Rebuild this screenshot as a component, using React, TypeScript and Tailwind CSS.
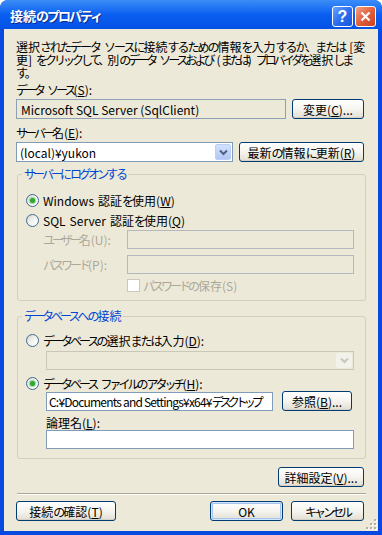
import React from "react";

// MS UI Gothic style: kana are narrower than kanji, spaces a bit wider
function J({
  t,
  hira = "tracking-[-2px]",
  kata = "tracking-[-3px]",
}: {
  t: string;
  hira?: string;
  kata?: string;
}) {
  const parts = t.split(/([\u3040-\u309f\u3001\u3002]+|[\u30a0-\u30ff]+| )/).filter(Boolean);
  return (
    <>
      {parts.map((p, i) => {
        if (p === " ") return <span key={i} className="inline-block w-[4px]" />;
        if (/[\u3040-\u309f\u3001\u3002]/.test(p))
          return (
            <span key={i} className={hira}>
              {p}
            </span>
          );
        if (/[\u30a0-\u30ff]/.test(p))
          return (
            <span key={i} className={kata}>
              {p}
            </span>
          );
        return <React.Fragment key={i}>{p}</React.Fragment>;
      })}
    </>
  );
}

function Btn({
  children,
  className = "",
  isDefault = false,
}: {
  children: React.ReactNode;
  className?: string;
  isDefault?: boolean;
}) {
  return (
    <div
      className={`flex h-[20px] items-center justify-center rounded-[3px] border border-[#003c74] bg-linear-to-b from-white via-[#f5f4ef] to-[#e2ded2] whitespace-nowrap text-black ${
        isDefault
          ? "shadow-[inset_0_0_0_1px_#cee7ff,inset_0_0_0_2px_#a8c4ee]"
          : "shadow-[inset_0_-1px_0_#d6d0c5]"
      } ${className}`}
    >
      {children}
    </div>
  );
}

function Radio({ checked = false }: { checked?: boolean }) {
  return (
    <span className="flex h-[13px] w-[13px] shrink-0 items-center justify-center rounded-full border border-[#3e6a96] bg-linear-to-br from-[#d8d8d2] via-[#f3f3ef] to-white">
      {checked && (
        <span className="h-[5px] w-[5px] rounded-full bg-[#2fa82f] shadow-[0_0_0_1px_#9bd89b]" />
      )}
    </span>
  );
}

function Chevron({ color }: { color: string }) {
  return (
    <svg width="9" height="7" viewBox="0 0 9 7">
      <path d="M1 1.5 L4.5 5 L8 1.5" fill="none" stroke={color} strokeWidth="2" />
    </svg>
  );
}

export default function App() {
  return (
    <div className="relative flex h-[535px] w-[382px] flex-col overflow-hidden rounded-t-[8px] bg-[#0849df] font-['Noto_Sans_CJK_JP','Noto_Sans',sans-serif] text-[12px] leading-[13px] text-black">
      {/* title bar */}
      <div className="flex h-[29px] shrink-0 items-center justify-between rounded-t-[7px] bg-linear-to-b from-[#3b8df8] via-[#0a5ef0] to-[#0451e6] pr-[6px] pl-[10px]">
        <span className="pt-[1px] text-[13px] font-bold whitespace-nowrap text-white [text-shadow:1px_1px_0_#0a2a8c]">
          <J t="接続のプロパティ" kata="tracking-[-2px]" />
        </span>
        <div className="flex gap-[2px] pt-[4px]">
          <div className="flex h-[21px] w-[21px] items-center justify-center rounded-[3px] border border-white bg-linear-to-br from-[#6aa2ff] via-[#2d6ef2] to-[#1a54d8] font-['Liberation_Sans',sans-serif] text-[16px] font-bold leading-none text-white">
            ?
          </div>
          <div className="flex h-[21px] w-[21px] items-center justify-center rounded-[3px] border border-white bg-linear-to-br from-[#f2a083] via-[#e2603c] to-[#c9401f]">
            <svg width="11" height="11" viewBox="0 0 11 11">
              <path d="M1.5 1.5 L9.5 9.5 M9.5 1.5 L1.5 9.5" stroke="white" strokeWidth="2.2" />
            </svg>
          </div>
        </div>
      </div>

      {/* client */}
      <div className="relative mx-[4px] mb-[4px] flex flex-1 flex-col bg-[#ece9d8] pt-[11px] pr-[14px] pl-[12px]">
        <p className="whitespace-nowrap">
          <J
            t="選択されたデータ ソースに接続するための情報を入力するか、または [変"
            kata="tracking-[-2px]"
          />
          <br />
          <J
            t="更] をクリックして、別のデータ ソースおよび (または) プロバイダを選択しま"
            hira="tracking-[-3px]"
          />
          <br />
          <J t="す。" />
        </p>

        <div className="mt-[4px] whitespace-nowrap">
          <J t="データ ソース" />(<u>S</u>):
        </div>
        <div className="mt-[3px] flex gap-[6px]">
          <div className="flex h-[20px] flex-1 items-center border border-[#8ea1b4] bg-[#ece9d8] pl-[4px] whitespace-nowrap">
            Microsoft SQL Server (SqlClient)
          </div>
          <Btn className="w-[72px]">
            変更(<u>C</u>)...
          </Btn>
        </div>

        <div className="mt-[7px] whitespace-nowrap">
          <J t="サーバー名" />(<u>E</u>):
        </div>
        <div className="mt-[3px] flex gap-[6px]">
          <div className="flex h-[20px] flex-1 items-center justify-between border border-[#7f9db9] bg-white pl-[3px]">
            <span>(local)¥yukon</span>
            <div className="mr-[1px] flex h-[16px] w-[16px] items-center justify-center rounded-[2px] border border-[#bccff9] bg-linear-to-b from-[#d3e1fe] to-[#b2c7f6]">
              <Chevron color="#4d6185" />
            </div>
          </div>
          <Btn className="w-[125px]">
            <J t="最新の情報に更新" />(<u>R</u>)
          </Btn>
        </div>

        {/* group 1 */}
        <fieldset className="mt-[5px] -mr-[2px] ml-[1px] rounded-[3px] border border-[#d0d0bf] pr-[11px] pb-[8px]">
          <legend className="ml-[4px] px-[2px] leading-[14px] whitespace-nowrap text-[#0046d5]">
            <J t="サーバーにログオンする" />
          </legend>
          <div className="mt-[11px] flex h-[16px] items-center gap-[4px] pl-[8px]">
            <Radio checked />
            <span className="whitespace-nowrap">
              <J t="Windows 認証を使用" />(<u>W</u>)
            </span>
          </div>
          <div className="mt-[4px] flex h-[16px] items-center gap-[4px] pl-[8px]">
            <Radio />
            <span className="whitespace-nowrap">
              <J t="SQL Server 認証を使用" />(<u>Q</u>)
            </span>
          </div>
          <div className="mt-[2px] flex items-center pl-[25px]">
            <span className="w-[84px] whitespace-nowrap text-[#aca899]">
              <J t="ユーザー名" />
              (U):
            </span>
            <div className="h-[19px] flex-1 border border-[#b4b9bf] bg-[#ece9d8]" />
          </div>
          <div className="mt-[6px] flex items-center pl-[25px]">
            <span className="w-[84px] whitespace-nowrap text-[#aca899]">
              <J t="パスワード" />
              (P):
            </span>
            <div className="h-[19px] flex-1 border border-[#b4b9bf] bg-[#ece9d8]" />
          </div>
          <div className="mt-[5px] flex h-[13px] items-center gap-[3px] pl-[109px]">
            <span className="h-[13px] w-[13px] border border-[#cac8bb] bg-white" />
            <span className="whitespace-nowrap text-[#aca899]">
              <J t="パスワードの保存" />
              (S)
            </span>
          </div>
        </fieldset>

        {/* group 2 */}
        <fieldset className="mt-[8px] -mr-[2px] ml-[1px] rounded-[3px] border border-[#d0d0bf] pr-[11px] pb-[9px]">
          <legend className="ml-[4px] px-[2px] leading-[14px] whitespace-nowrap text-[#0046d5]">
            <J t="データベースへの接続" />
          </legend>
          <div className="mt-[9px] flex h-[16px] items-center gap-[4px] pl-[8px]">
            <Radio />
            <span className="whitespace-nowrap">
              <J t="データベースの選択または入力" />(<u>D</u>):
            </span>
          </div>
          <div className="mt-[3px] ml-[28px] flex h-[19px] items-center justify-end border border-[#c9c7ba] bg-[#ece9d8]">
            <div className="mr-[1px] flex h-[15px] w-[16px] items-center justify-center rounded-[2px] bg-[#f2f1ea]">
              <Chevron color="#c9c7ba" />
            </div>
          </div>
          <div className="mt-[5px] flex h-[16px] items-center gap-[4px] pl-[8px]">
            <Radio checked />
            <span className="whitespace-nowrap">
              <J t="データベース ファイルのアタッチ" />(<u>H</u>):
            </span>
          </div>
          <div className="ml-[28px] flex items-center gap-[9px]">
            <div className="flex h-[19px] w-[227px] shrink-0 items-center overflow-hidden border border-[#7f9db9] bg-white pl-[2px] whitespace-nowrap">
              <span className="tracking-[-0.8px]">C:¥Documents and Settings¥x64¥</span>
              <J t="デスクトップ" kata="tracking-[-4px]" />
            </div>
            <Btn className="w-[70px]">
              <J t="参照" />(<u>B</u>)...
            </Btn>
          </div>
          <div className="mt-[4px] ml-[28px] flex h-[14px] items-center whitespace-nowrap">
            論理名(<u>L</u>):
          </div>
          <div className="mt-[1px] ml-[28px] h-[19px] border border-[#7f9db9] bg-white" />
        </fieldset>

        <div className="mt-[8px] flex justify-end">
          <Btn className="w-[86px]">
            詳細設定(<u>V</u>)...
          </Btn>
        </div>

        <div className="mt-[6px] -mr-[2px] ml-[1px] h-[2px] border-t border-[#aca899] bg-white" />

        <div className="mt-[6px] flex items-center">
          <Btn className="w-[100px]">
            <J t="接続の確認" />(<u>T</u>)
          </Btn>
          <div className="flex-1" />
          <Btn className="w-[73px]" isDefault>
            OK
          </Btn>
          <Btn className="ml-[8px] w-[73px]">
            <J t="キャンセル" />
          </Btn>
        </div>

        {/* resize grip */}
        <svg className="absolute right-[1px] bottom-[1px]" width="12" height="12" viewBox="0 0 12 12">
          {[
            [9, 1],
            [9, 5],
            [5, 5],
            [9, 9],
            [5, 9],
            [1, 9],
          ].map(([x, y]) => (
            <g key={`${x}-${y}`}>
              <rect x={x + 1} y={y + 1} width="2" height="2" fill="#ffffff" />
              <rect x={x} y={y} width="2" height="2" fill="#b5b19d" />
            </g>
          ))}
        </svg>
      </div>
    </div>
  );
}
